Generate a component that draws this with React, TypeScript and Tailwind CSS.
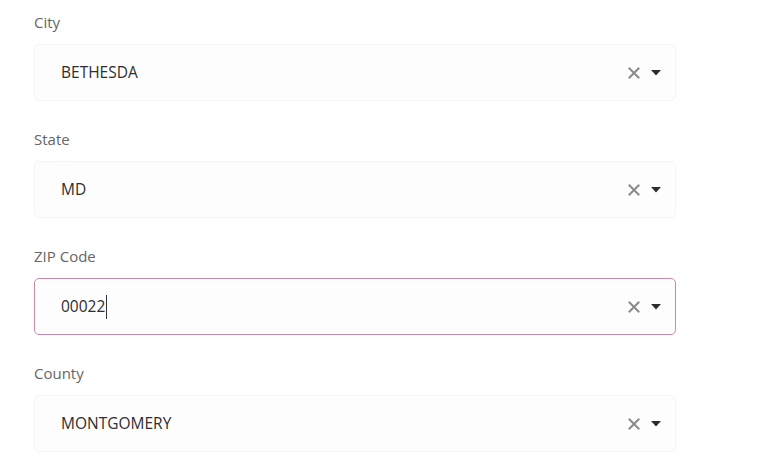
import React from "react";

function XIcon() {
  return (
    <svg width="12" height="12" viewBox="0 0 12 12" className="block">
      <path d="M1.5 1.5 L10.5 10.5 M10.5 1.5 L1.5 10.5" stroke="#8a8a8a" strokeWidth="2" strokeLinecap="square" />
    </svg>
  );
}

function Caret() {
  return (
    <svg width="10" height="6" viewBox="0 0 10 6" className="block">
      <path d="M0 0 L10 0 L5 5.5 Z" fill="#2d2d2d" />
    </svg>
  );
}

function Field({ label, value, focused }: { label: string; value: string; focused?: boolean }) {
  return (
    <div className="mb-[28px]">
      <div className="h-[20px] leading-[20px] text-[15px] text-[#666666] mb-[12px]">{label}</div>
      <div
        className={
          "h-[57px] w-[642px] flex items-center pl-[26px] pr-[14px] rounded-[5px] border " +
          (focused ? "border-[#c98aa8] bg-[#fdfdfd]" : "border-[#f5f5f5] bg-[#fdfdfd]")
        }
      >
        <div className="flex-1 flex items-center text-[15.5px] text-[#2e2e2e]">
          <span>{value}</span>
          {focused && <span className="inline-block w-px h-[24px] bg-[#333] ml-[1px]" />}
        </div>
        <div className="flex items-center gap-[11px]">
          <XIcon />
          <Caret />
        </div>
      </div>
    </div>
  );
}

export default function App() {
  return (
    <div
      className="w-[770px] h-[468px] bg-white pl-[34px] pt-[12px] overflow-hidden"
      style={{ fontFamily: '"Open Sans", "Noto Sans", sans-serif' }}
    >
      <Field label="City" value="BETHESDA" />
      <Field label="State" value="MD" />
      <Field label="ZIP Code" value="00022" focused />
      <Field label="County" value="MONTGOMERY" />
    </div>
  );
}
